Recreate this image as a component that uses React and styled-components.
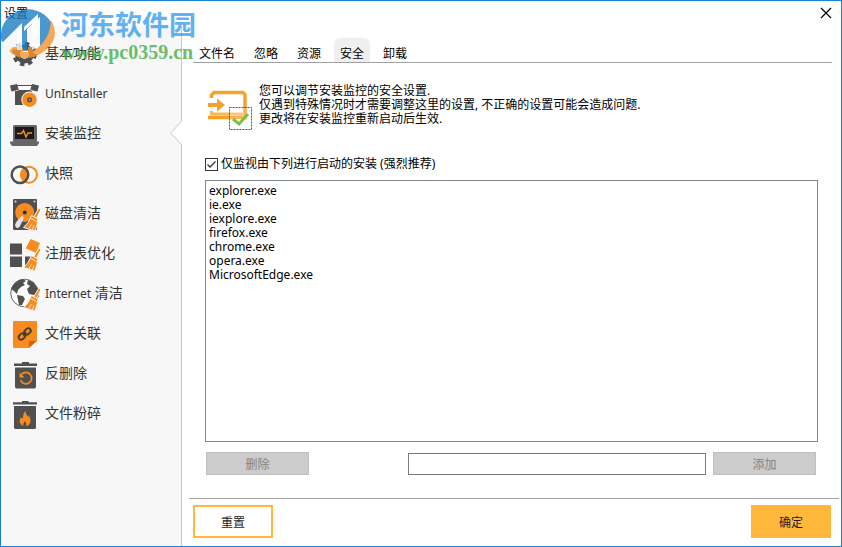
import { useState } from "react";
import styled, { createGlobalStyle } from "styled-components";

const GlobalStyle = createGlobalStyle`
    * {
        box-sizing: border-box;
    }

    body {
        margin: 0;
        font-family: "Noto Sans", "Noto Sans CJK SC", sans-serif;
        font-size: 12px;
        color: #000;
    }

    button, input, select {
        font: inherit;
    }
`;

// Window
const Window = styled.div`
    position: relative;
    display: flex;
    flex-direction: column;
    min-height: 100vh;
    background-color: #fff;
    border: 1px solid #1883d7;
`;

const TitleBar = styled.header`
    display: flex;
    justify-content: space-between;
    align-items: center;
    height: 25px;
    padding: 0 9px 2px 3px;
`;

const WindowTitle = styled.h1`
    margin: 0;
    font-size: 12px;
    font-weight: 400;
`;

const CloseButton = styled.button`
    display: flex;
    padding: 0;
    border: none;
    background: none;
    cursor: pointer;
`;

const Body = styled.div`
    display: flex;
    flex: 1;
`;

// Watermark
const Watermark = styled.div`
    position: absolute;
    top: 4px;
    left: -1px;
    display: flex;
    gap: 4px;
    opacity: 0.8;
    pointer-events: none;
`;

const WatermarkText = styled.div`
    display: flex;
    flex-direction: column;
`;

const WatermarkName = styled.span`
    font-family: "Noto Sans CJK SC", sans-serif;
    font-size: 27px;
    font-weight: 700;
    line-height: 37px;
    color: #3b9fee;
`;

const WatermarkUrl = styled.span`
    font-family: "Liberation Serif", serif;
    font-size: 20px;
    font-weight: 700;
    line-height: 20px;
    color: #45b045;
`;

// Sidebar
const Sidebar = styled.nav`
    flex: 0 0 181px;
    padding-top: 7px;
    background-color: #f7f7f7;
    border-right: 1px solid #c8c8c8;
`;

const SidebarItem = styled.a`
    position: relative;
    display: flex;
    align-items: center;
    gap: 5px;
    height: 40px;
    padding-left: 9px;
    color: #333;
    text-decoration: none;
`;

const ItemIcon = styled.svg`
    flex: none;
    width: 30px;
    height: 40px;
`;

const ItemLabel = styled.span`
    padding-bottom: 2px;
    font-size: 14px;
`;

const Latin = styled.span`
    font-size: 12px;
`;

const Notch = styled.svg`
    position: absolute;
    top: 8px;
    right: -1px;
`;

// Content
const Content = styled.main`
    display: flex;
    flex-direction: column;
    flex: 1;
    min-width: 0;
`;

const Tabs = styled.div`
    display: flex;
    gap: 7px;
    margin: 12px 9px 0 11px;
    border-bottom: 1px solid #a0a0a0;
`;

const Tab = styled.button`
    height: 24px;
    padding: 6px 6px 0;
    border: none;
    border-radius: 6px 6px 0 0;
    background-color: ${({ $active }) => ($active ? "#efefef" : "transparent")};
    color: #000;
    cursor: pointer;
`;

const Panel = styled.section`
    display: flex;
    flex-direction: column;
    flex: 1;
    padding: 20px 23px 23px;
`;

const Intro = styled.div`
    display: flex;
    gap: 5px;
    padding-left: 2px;
`;

const IntroText = styled.p`
    margin: 0;
    padding-top: 1px;
    line-height: 14px;
`;

const CheckRow = styled.label`
    display: flex;
    align-items: center;
    gap: 3px;
    margin-top: 25px;
    line-height: 16px;
`;

const CheckHolder = styled.span`
    position: relative;
    display: flex;
`;

const CheckBox = styled.input`
    appearance: none;
    width: 13px;
    height: 13px;
    margin: 0;
    border: 1px solid #333;
    background-color: #fff;
`;

const CheckMark = styled.svg`
    position: absolute;
    inset: 0;
    pointer-events: none;
`;

const ListBox = styled.select`
    flex: 1;
    width: 100%;
    min-height: 200px;
    margin-top: 8px;
    padding: 1px 0;
    border: 1px solid #828790;
    border-radius: 0;
    background-color: #fff;
    color: #000;
    outline: none;
`;

const ListOption = styled.option`
    height: 14px;
    min-height: 14px;
    padding: 0 3px;
    overflow: visible;
`;

const ActionRow = styled.div`
    display: flex;
    align-items: center;
    gap: 7px;
    margin-top: 10px;
    padding: 0 2px 0 1px;
`;

const GreyButton = styled.button`
    width: 103px;
    height: 23px;
    padding: 0;
    border: 1px solid #bfbfbf;
    background-color: #ccc;
    color: #838383;
`;

const NameInput = styled.input`
    flex: 0 1 298px;
    min-width: 60px;
    height: 22px;
    margin-left: auto;
    padding: 0 4px;
    border: 1px solid #7a7a7a;
`;

const Footer = styled.footer`
    display: flex;
    justify-content: space-between;
    margin: 0 2px 0 7px;
    padding: 6px 8px 8px 4px;
    border-top: 1px solid #a0a0a0;
`;

const FooterButton = styled.button`
    width: 80px;
    height: 33px;
    padding: 0;
    border: 2px solid #ffb83c;
    background-color: ${({ $primary }) => ($primary ? "#ffb83c" : "#fff")};
    color: #1e1e28;
    cursor: pointer;
`;

const DARK = "#505050";
const ORANGE = "#f68b1f";

const Broom = () => (
    <g stroke="#f7f7f7" strokeWidth="1">
        <path d="M29 15 L31 16.5 L26.5 25.5 L23.5 24 Z" fill={ORANGE} />
        <path d="M21.5 22.5 L28 26 Q27 33 25 38 L13.5 34.5 Q19 30 21.5 22.5 Z" fill={ORANGE} />
        <path d="M21 25.5 L27.5 29 M19 35.5 L21.5 31 M22.5 37 L24 32" fill="none" strokeWidth="0.8" />
    </g>
);

const icons = {
    basic: (
        <>
            <circle cx="14.5" cy="21" r="7" fill="none" stroke={DARK} strokeWidth="5" />
            <circle cx="14.5" cy="21" r="10" fill="none" stroke={DARK} strokeWidth="4.5" strokeDasharray="4.2 3.654" />
            <circle cx="14.5" cy="21" r="4.5" fill="#f7f7f7" />
        </>
    ),
    uninstaller: (
        <>
            <path d="M0 12.5 L7 11 L8 17 L1.5 18.5 Z M29 12.5 L22 11 L21 17 L27.5 18.5 Z" fill={DARK} />
            <path d="M7 12.5 H22 L20.5 17.5 H8.5 Z" fill="#fff" stroke={DARK} />
            <path d="M5 18 H22 V32 H5 Z" fill={DARK} />
            <circle cx="19.5" cy="26.7" r="8.2" fill="#f7f7f7" />
            <circle cx="19.5" cy="26.7" r="7.2" fill={ORANGE} />
            <circle cx="19.5" cy="26.7" r="1.8" fill={ORANGE} stroke={DARK} strokeWidth="1.5" />
        </>
    ),
    monitor: (
        <>
            <rect x="3" y="12" width="24" height="17" rx="1.5" fill="#666" />
            <rect x="5" y="14" width="19" height="12" fill="#1a1a1a" />
            <path d="M0 28.5 H29 V30 L27 33 H2 L0 30 Z" fill="#666" />
            <path d="M7 20.5 H11.5 L13.5 17.5 L16 24 L18 20 H22" fill="none" stroke={ORANGE} strokeWidth="1.5" />
        </>
    ),
    snapshot: (
        <>
            <path d="M14.5 14.5 A8.5 8.5 0 0 1 14.5 29 A8.5 8.5 0 0 1 14.5 14.5 Z" fill={ORANGE} />
            <circle cx="19" cy="21.7" r="8" fill="none" stroke={ORANGE} strokeWidth="2" />
            <circle cx="10" cy="21.7" r="8.3" fill="none" stroke={DARK} strokeWidth="2.5" />
        </>
    ),
    disk: (
        <>
            <rect x="3" y="6" width="24" height="31" rx="1" fill={DARK} />
            <g fill="#ddd">
                <circle cx="5.5" cy="8.5" r="1" />
                <circle cx="24.5" cy="8.5" r="1" />
            </g>
            <circle cx="14.7" cy="19.5" r="9.5" fill={ORANGE} />
            <circle cx="14.7" cy="19.5" r="2" fill="#333" />
            <path d="M12.5 22.5 Q14 24 13.5 26 L9.5 34 Q6 37 5 32 Q6 28 12.5 22.5 Z" fill="#e3e3e3" />
            <Broom />
        </>
    ),
    registry: (
        <>
            <path d="M0 10.5 H12 V21.5 H0 Z M0 23.5 H12 V34 H0 Z M15 23.5 H25 V34 H15 Z" fill={DARK} />
            <path d="M20.7 6 L30 10 L26 20 L15.7 15.3 Z" fill={ORANGE} />
            <Broom />
        </>
    ),
    internet: (
        <>
            <circle cx="14.5" cy="20" r="13.8" fill="#fff" stroke="#666" />
            <path d="M1 16 Q5 7 13 6 L16 8 L13 10 L15 12 L11 14 L8 17 L7 21 L4 18 Z" fill={DARK} />
            <path d="M7 22 L13 23 L15 26 L12 32 L9 32 L8 27 Z" fill={DARK} />
            <path d="M18 7 L23 9 L28 16 L29 23 L26 27 L24 22 L19 21 L17 16 L20 13 L17 11 Z" fill={DARK} />
            <Broom />
        </>
    ),
    association: (
        <>
            <rect x="3" y="8" width="24" height="27" rx="1" fill={ORANGE} />
            <path d="M19 35 V28 H27 Z" fill="#d95f0e" />
            <path d="M19 35 L27 28 V35 Z" fill="#f7f7f7" />
            <g transform="rotate(-42 14.7 21)" fill="none" stroke="#4a3a28" strokeWidth="1.8">
                <rect x="7.5" y="18.5" width="7" height="5" rx="2.5" />
                <rect x="15" y="18.5" width="7" height="5" rx="2.5" />
                <path d="M12.5 21 H17" />
            </g>
        </>
    ),
    undelete: (
        <>
            <path d="M12 9 H19 V10.5 H27 V13 H4 V10.5 H12 Z" fill={DARK} />
            <path d="M5 14.5 H26 V34 L25 35.5 H6 L5 34 Z" fill={DARK} />
            <path d="M11.5 21.5 A5.7 5.7 0 1 1 10.5 27" fill="none" stroke={ORANGE} strokeWidth="1.7" />
            <path d="M9.5 19.5 V24.5 H14.5 Z" fill={ORANGE} />
        </>
    ),
    shred: (
        <>
            <path d="M12 8 H18.5 V9.3 H27 V11.5 H3 V9.3 H12 Z" fill={DARK} />
            <path d="M4 13 H26 V35 L25 36 H5 L4 35 Z" fill={DARK} />
            <path d="M15.5 18 Q15.5 21 18 24 Q19 23 18.5 22 Q22 27 19.5 31 Q18 33 16 33 Q17 31 15 28 Q12.5 31 13.5 33 Q9 31 9.8 27 Q10.5 25 11 24 Q11.5 26 13 25 Q13 20 15.5 18 Z" fill={ORANGE} />
        </>
    ),
};

const menu = [
    { id: "basic", label: "基本功能" },
    { id: "uninstaller", latin: "UnInstaller" },
    { id: "monitor", label: "安装监控", active: true },
    { id: "snapshot", label: "快照" },
    { id: "disk", label: "磁盘清洁" },
    { id: "registry", label: "注册表优化" },
    { id: "internet", latin: "Internet", label: " 清洁" },
    { id: "association", label: "文件关联" },
    { id: "undelete", label: "反删除" },
    { id: "shred", label: "文件粉碎" },
];

const tabs = ["文件名", "忽略", "资源", "安全", "卸载"];

const programs = [
    "explorer.exe",
    "ie.exe",
    "iexplore.exe",
    "firefox.exe",
    "chrome.exe",
    "opera.exe",
    "MicrosoftEdge.exe",
];

const App = () => {
    const [tab, setTab] = useState("安全");
    const [checked, setChecked] = useState(true);

    return (
        <Window>
            <GlobalStyle />
            <TitleBar>
                <WindowTitle>设置</WindowTitle>
                <CloseButton aria-label="关闭">
                    <svg width="12" height="12" viewBox="0 0 12 12">
                        <path d="M1 1 L11 11 M11 1 L1 11" stroke="#000" strokeWidth="1.2" />
                    </svg>
                </CloseButton>
            </TitleBar>

            <Body>
                <Sidebar>
                    {menu.map((item) => (
                        <SidebarItem key={item.id} href={`#${item.id}`}>
                            <ItemIcon viewBox="0 0 30 40">{icons[item.id]}</ItemIcon>
                            <ItemLabel>
                                {item.latin && <Latin>{item.latin}</Latin>}
                                {item.label}
                            </ItemLabel>
                            {item.active && (
                                <Notch width="12" height="24" viewBox="0 0 12 24">
                                    <path d="M12 0 L0.7 12 L12 24 Z" fill="#fff" />
                                    <path d="M11.5 0.5 L0.7 12 L11.5 23.5" fill="none" stroke="#c8c8c8" />
                                </Notch>
                            )}
                        </SidebarItem>
                    ))}
                </Sidebar>

                <Content>
                    <Tabs role="tablist">
                        {tabs.map((name) => (
                            <Tab
                                key={name}
                                role="tab"
                                aria-selected={tab === name}
                                $active={tab === name}
                                onClick={() => setTab(name)}
                            >
                                {name}
                            </Tab>
                        ))}
                    </Tabs>

                    <Panel>
                        <Intro>
                            <svg width="47" height="48" viewBox="0 0 47 48">
                                <path d="M4.5 15 V12 L7 9.5 H36 L38 11.5 V33" fill="none" stroke="#f5a12b" strokeWidth="3.5" />
                                <path d="M4.5 28 V31 H36" fill="none" stroke="#f7b75a" strokeWidth="3" />
                                <path d="M1 34.500 H40" stroke="#f5a12b" strokeWidth="3.5" />
                                <path d="M1 20 H10 V15.5 L18 22 L10 28.5 V24 H1 Z" fill="#f5a12b" />
                                <rect x="22.5" y="24.5" width="22" height="22" fill="#fff" fillOpacity="0.2" stroke="#555" strokeDasharray="2 1" />
                                <path d="M26 36 L32 41 L41 31" fill="none" stroke="#7ac143" strokeWidth="3" />
                            </svg>
                            <IntroText>
                                您可以调节安装监控的安全设置.
                                <br />
                                仅遇到特殊情况时才需要调整这里的设置, 不正确的设置可能会造成问题.
                                <br />
                                更改将在安装监控重新启动后生效.
                            </IntroText>
                        </Intro>

                        <CheckRow>
                            <CheckHolder>
                                <CheckBox
                                    type="checkbox"
                                    checked={checked}
                                    onChange={(e) => setChecked(e.target.checked)}
                                />
                                {checked && (
                                    <CheckMark width="13" height="13" viewBox="0 0 13 13">
                                        <path d="M2.5 6.5 L5 9 L10.5 3.5" fill="none" stroke="#333" strokeWidth="1.3" />
                                    </CheckMark>
                                )}
                            </CheckHolder>
                            仅监视由下列进行启动的安装 (强烈推荐)
                        </CheckRow>

                        <ListBox multiple aria-label="程序列表">
                            {programs.map((name) => (
                                <ListOption key={name}>{name}</ListOption>
                            ))}
                        </ListBox>

                        <ActionRow>
                            <GreyButton disabled>删除</GreyButton>
                            <NameInput type="text" aria-label="程序名称" />
                            <GreyButton disabled>添加</GreyButton>
                        </ActionRow>
                    </Panel>

                    <Footer>
                        <FooterButton>重置</FooterButton>
                        <FooterButton $primary>确定</FooterButton>
                    </Footer>
                </Content>
            </Body>

            <Watermark>
                <svg width="57" height="57" viewBox="0 0 57 57">
                    <path d="M1.5 36 A27 26 0 0 1 51 17 Q55 32 40 43 V12 L27 24 V46 H22 V20 L5 39 Z" fill="#1f7fc4" />
                    <path d="M51 15 Q60 31 48 43 Q37 54 23 53 Q15 52 9 46 L13 42 H23 V47 H28 V42 H33 V46 Q50 36 51 15 Z" fill="#f5962c" />
                    <path d="M2 38 L22 18 V45 H17 V28 L5 41 Z M24 22 L38 9 V42 L32 45 V19 L24 26 Z" fill="#fff" />
                </svg>
                <WatermarkText>
                    <WatermarkName>河东软件园</WatermarkName>
                    <WatermarkUrl>www.pc0359.cn</WatermarkUrl>
                </WatermarkText>
            </Watermark>
        </Window>
    );
};

export default App;
